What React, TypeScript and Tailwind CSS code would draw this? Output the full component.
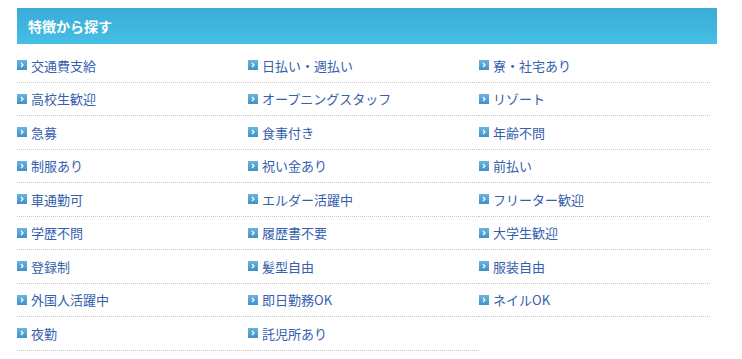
const features = [
  '交通費支給', '日払い・週払い', '寮・社宅あり',
  '高校生歓迎', 'オープニングスタッフ', 'リゾート',
  '急募', '食事付き', '年齢不問',
  '制服あり', '祝い金あり', '前払い',
  '車通勤可', 'エルダー活躍中', 'フリーター歓迎',
  '学歴不問', '履歴書不要', '大学生歓迎',
  '登録制', '髪型自由', '服装自由',
  '外国人活躍中', '即日勤務OK', 'ネイルOK',
  '夜勤', '託児所あり',
];

function ArrowIcon() {
  return (
    <svg width="10" height="10" viewBox="0 0 10 10" className="shrink-0">
      <defs>
        <linearGradient id="ico" x1="0" y1="0" x2="0" y2="1">
          <stop offset="0" stopColor="#6ab4de" />
          <stop offset="1" stopColor="#3f92c8" />
        </linearGradient>
      </defs>
      <rect width="10" height="10" fill="url(#ico)" />
      <path d="M4 3l2 2-2 2" fill="none" stroke="#fff" strokeWidth="1.2" />
    </svg>
  );
}

export default function App() {
  return (
    <div
      className="w-[742px] h-[359px] bg-white pt-2 px-[17px]"
      style={{ fontFamily: '"Noto Sans CJK JP", "Noto Sans", sans-serif' }}
    >
      {/* Header */}
      <div className="w-[700px] h-9 flex items-center pl-[11px] bg-gradient-to-b from-[#39acd7] to-[#46bee6]">
        <h2 className="text-white font-bold text-[14px] leading-none">特徴から探す</h2>
      </div>

      {/* Feature list */}
      <ul className="w-[700px] mt-[5px] flex flex-wrap">
        {features.map((f) => (
          <li
            key={f}
            className="w-[231px] h-[33.5px] flex items-center gap-1 border-b border-dotted border-[#c8c8c8]"
          >
            <ArrowIcon />
            <a className="text-[13px] text-[#3560ad] leading-none">{f}</a>
          </li>
        ))}
      </ul>
    </div>
  );
}
